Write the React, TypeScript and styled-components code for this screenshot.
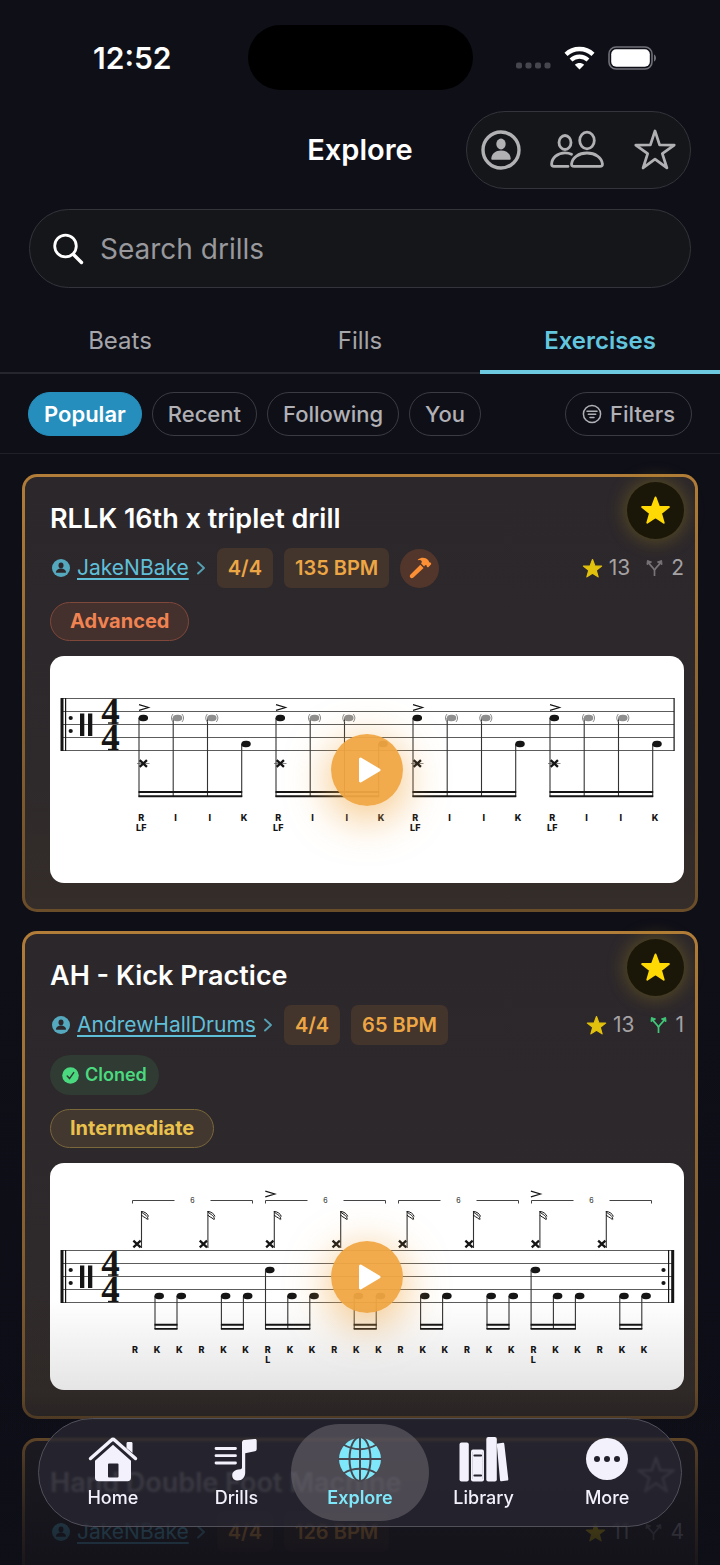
import React from 'react';
import styled, { createGlobalStyle, css } from 'styled-components';

const Global = createGlobalStyle`
  *, *::before, *::after { box-sizing: border-box; }
  body {
    margin: 0;
    background: #0f0f18;
    color: #fff;
    font-family: Inter, "Liberation Sans", sans-serif;
    -webkit-font-smoothing: antialiased;
  }
  button, input { font: inherit; color: inherit; }
  button { margin: 0; padding: 0; border: 0; background: none; cursor: pointer; }
  svg { display: block; }
`;

const Screen = styled.div`
  position: relative;
  display: flex;
  flex-direction: column;
  height: 100vh;
  overflow: hidden;
  background: linear-gradient(#0f0f18 0 60%, #0c0d16);
`;

/* ---------- status bar ---------- */

const StatusBar = styled.div`
  display: grid;
  grid-template-columns: 1fr 225px 1fr;
  align-items: center;
  flex: none;
  padding: 25px 0 21px;
`;

const Clock = styled.time`
  padding-left: 93px;
  font-size: 30px;
  line-height: 36px;
  font-weight: 600;
`;

const Island = styled.div`
  height: 65px;
  border-radius: 33px;
  background: #000;
`;

const StatusIcons = styled.div`
  display: flex;
  align-items: center;
  justify-content: flex-end;
  gap: 13px;
  padding-right: 63px;
`;

/* ---------- header ---------- */

const NavBar = styled.header`
  display: grid;
  grid-template-columns: 1fr auto 1fr;
  align-items: center;
  flex: none;
  padding: 0 29px;
`;

const Title = styled.h1`
  grid-column: 2;
  margin: 0;
  font-size: 29px;
  line-height: 38px;
  font-weight: 600;
`;

const glass = css`
  border: 1px solid #33343c;
  border-radius: 40px;
  background: #15161a;
`;

const Actions = styled.div`
  ${glass}
  display: flex;
  align-items: center;
  justify-self: end;
  gap: 29px;
  height: 78px;
  padding: 0 13px 0 14px;
  color: #b1b1b4;
`;

const SearchField = styled.label`
  ${glass}
  display: flex;
  align-items: center;
  flex: none;
  gap: 16px;
  height: 79px;
  margin: 20px 29px 0;
  padding: 0 22px;
`;

const SearchInput = styled.input`
  flex: 1;
  min-width: 0;
  padding: 0;
  border: 0;
  outline: 0;
  background: none;
  font-size: 28px;
  line-height: 36px;
  &::placeholder { color: #98989d; opacity: 1; }
`;

const Tabs = styled.div`
  display: grid;
  grid-template-columns: repeat(3, 1fr);
  flex: none;
  height: 86px;
  box-shadow: inset 0 -2px #26262e;
`;

const Tab = styled.button<{ $active?: boolean }>`
  padding-top: 24px;
  border-bottom: 4px solid ${p => (p.$active ? '#6cc9e0' : 'transparent')};
  color: ${p => (p.$active ? '#63c6df' : '#a5a5aa')};
  font-size: 24px;
  line-height: 30px;
  font-weight: ${p => (p.$active ? 600 : 400)};
`;

const FilterRow = styled.div`
  display: flex;
  align-items: center;
  flex: none;
  gap: 10px;
  padding: 18px 28px 17px;
  border-bottom: 1px solid #20202a;
`;

const Chip = styled.button<{ $active?: boolean; $end?: boolean }>`
  display: flex;
  align-items: center;
  gap: 8px;
  height: 44px;
  margin-left: ${p => (p.$end ? 'auto' : 0)};
  padding: 0 ${p => (p.$end ? 16 : 15)}px;
  border: 1px solid ${p => (p.$active ? '#268ebc' : '#3b3b43')};
  border-radius: 22px;
  background: ${p => (p.$active ? '#268ebc' : 'transparent')};
  color: ${p => (p.$active ? '#fff' : '#b0b0b5')};
  font-size: 22px;
  line-height: 26px;
  font-weight: ${p => (p.$active ? 600 : 500)};
`;

/* ---------- feed ---------- */

const Feed = styled.main`
  display: flex;
  flex-direction: column;
  flex: 1;
  min-height: 0;
  gap: 19px;
  padding: 20px 22px 0;
  overflow: hidden;
`;

const Card = styled.article`
  position: relative;
  display: flex;
  flex-direction: column;
  align-items: flex-start;
  flex: none;
  padding: 26px 11px 26px 25px;
  border: 3px solid transparent;
  border-radius: 15px;
  background:
    linear-gradient(#2c272b, #2e292b 70%, #342d29) padding-box,
    linear-gradient(#b17d38, #6a4d29) border-box;
`;

const CardTitle = styled.h2`
  margin: 0 0 13px;
  font-size: 27px;
  line-height: 32px;
  font-weight: 600;
`;

const Meta = styled.div`
  display: flex;
  align-items: center;
  width: 100%;
  gap: 11px;
`;

const Author = styled.a`
  display: flex;
  align-items: center;
  gap: 7px;
  padding-left: 2px;
  color: #5fbfd8;
  font-size: 21px;
  line-height: 26px;
  text-decoration: none;
  span {
    text-decoration: underline;
    text-decoration-thickness: 2px;
    text-underline-offset: 3px;
  }
`;

const Badge = styled.span`
  padding: 6px 11px;
  border-radius: 7px;
  background: #43342c;
  color: #eda644;
  font-size: 20px;
  line-height: 28px;
  font-weight: 600;
`;

const ToolBadge = styled.span`
  display: grid;
  place-items: center;
  width: 39px;
  height: 39px;
  border-radius: 50%;
  background: #52362b;
  color: #fd9034;
`;

const Stats = styled.div`
  display: flex;
  align-items: center;
  gap: 6px;
  margin-left: auto;
  color: #a5a2a4;
  font-size: 21px;
  line-height: 26px;
`;

const Fork = styled.span<{ $active?: boolean }>`
  margin: 0 2px 0 10px;
  color: ${p => (p.$active ? '#3fc878' : '#777376')};
`;

const Cloned = styled.span`
  display: flex;
  align-items: center;
  gap: 6px;
  height: 40px;
  margin-top: 10px;
  padding: 0 12px;
  border-radius: 20px;
  background: #2f3b33;
  color: #4bd97f;
  font-size: 18px;
  line-height: 24px;
  font-weight: 600;
`;

const levels = {
  Advanced: { ink: '#f08351', line: '#80483a', fill: '#44302d' },
  Intermediate: { ink: '#e9c14c', line: '#7a673a', fill: '#433830' },
};
type LevelName = keyof typeof levels;

const Level = styled.span<{ $level: LevelName }>`
  height: 39px;
  margin: 14px 0 15px;
  padding: 0 19px;
  border: 1px solid ${p => levels[p.$level].line};
  border-radius: 20px;
  background: ${p => levels[p.$level].fill};
  color: ${p => levels[p.$level].ink};
  font-size: 20px;
  line-height: 37px;
  font-weight: 700;
`;

const Favorite = styled.button<{ $on?: boolean }>`
  position: absolute;
  top: 5px;
  right: 11px;
  display: grid;
  place-items: center;
  width: 57px;
  height: 57px;
  border-radius: 50%;
  color: ${p => (p.$on ? '#ffd904' : '#c5c3ca')};
  ${p => p.$on && css`
    background: #1b1708;
    box-shadow: 0 0 18px 2px rgba(160, 135, 20, 0.4);
  `}
`;

const Sheet = styled.figure`
  position: relative;
  width: 100%;
  margin: 0;
  overflow: hidden;
  border-radius: 14px;
  background: #fff;
  svg { width: 100%; height: auto; }
`;

const PlayLayer = styled.div`
  position: absolute;
  inset: 0;
  display: grid;
  place-items: center;
`;

const Play = styled.button`
  display: grid;
  place-items: center;
  width: 72px;
  height: 72px;
  border-radius: 50%;
  background: rgba(240, 167, 66, 0.95);
  box-shadow: 0 10px 40px 4px rgba(240, 167, 66, 0.6);
  svg { width: 28px; }
`;

/* ---------- tab bar ---------- */

const Fade = styled.div`
  position: absolute;
  right: 0;
  bottom: 0;
  left: 0;
  height: 265px;
  background: linear-gradient(
    rgba(15, 15, 24, 0),
    rgba(15, 15, 24, 0.11) 34%,
    rgba(15, 15, 24, 0.3) 44%,
    rgba(15, 15, 24, 0.55) 54%,
    rgba(15, 15, 24, 0.72) 78%,
    rgba(15, 15, 24, 0.88)
  );
  pointer-events: none;
`;

const TabBar = styled.nav`
  position: absolute;
  right: 38px;
  bottom: 38px;
  left: 38px;
  display: grid;
  grid-template-columns: repeat(5, 1fr);
  height: 109px;
  padding: 5px 12px;
  border: 1px solid #51505b;
  border-radius: 55px;
  background: rgba(41, 40, 51, 0.72);
  backdrop-filter: blur(1px);
`;

const TabItem = styled.button<{ $active?: boolean }>`
  display: flex;
  flex-direction: column;
  align-items: center;
  gap: 4px;
  height: 97px;
  margin: 0 ${p => (p.$active ? '-7px' : '0')};
  padding-top: 12px;
  border-radius: 49px;
  background: ${p => (p.$active ? 'rgba(112, 106, 114, 0.55)' : 'none')};
  color: ${p => (p.$active ? '#7ee8fa' : '#f3f1fb')};
  font-size: 18px;
  line-height: 24px;
  font-weight: ${p => (p.$active ? 600 : 500)};
`;

/* ---------- icons ---------- */

const STAR = 'M12 1.8 L14.7 9 L22.4 9.3 L16.3 14.1 L18.4 21.5 L12 17.3 L5.6 21.5 L7.7 14.1 L1.6 9.3 L9.3 9 Z';
const STAR_LINE = 'M12 1.600 L14.500 9.200 L22.500 9.300 L16 14 L18.500 21.800 L12 17 L5.500 21.800 L8 14 L1.500 9.300 L9.500 9.200 Z';

const StarIcon = ({ size, outline }: { size: number; outline?: boolean }) => (
  <svg width={size} height={size} viewBox="0 0 24 24" fill={outline ? 'none' : 'currentColor'}
    stroke="currentColor" strokeWidth={outline ? 1.5 : 1.4} strokeLinejoin="round">
    <path d={outline ? STAR_LINE : STAR} />
  </svg>
);

const ProfileIcon = () => (
  <svg width="40" height="40" viewBox="0 0 40 40" fill="currentColor">
    <circle cx="20" cy="20" r="18" fill="none" stroke="currentColor" strokeWidth="3.4" />
    <ellipse cx="20" cy="14" rx="4.7" ry="5.4" />
    <path d="M10.3 28.5c.4-5 4.3-8 9.7-8s9.300 3 9.700 8c.1.8-.4 1.300-1.200 1.300h-17c-.8 0-1.300-.5-1.200-1.300z" />
  </svg>
);

const PeopleIcon = () => (
  <svg width="54" height="42" viewBox="0 0 54 42" fill="none" stroke="currentColor" strokeWidth="2.800" strokeLinecap="round" strokeLinejoin="round">
    <ellipse cx="15" cy="13.500" rx="6" ry="7" />
    <ellipse cx="37" cy="11.500" rx="7.300" ry="8.300" />
    <path d="M21.500 25.300c-1.900-1-4.200-1.500-6.500-1.500C7.600 23.800 1.800 29 1.600 35c0 1.700.8 2.400 2.400 2.400h14" />
    <path d="M24.200 37.400c-2 0-2.800-.9-2.600-2.700C22.400 28.500 28.600 24 37 24s14.600 4.500 15.400 10.700c.2 1.800-.6 2.700-2.600 2.700z" />
  </svg>
);

const SearchIcon = () => (
  <svg width="32" height="32" viewBox="0 0 32 32" fill="none" stroke="#fff" strokeWidth="2.800" strokeLinecap="round">
    <circle cx="13.500" cy="13" r="10.800" />
    <path d="M21.500 21.500L29.500 29.500" strokeWidth="3.400" />
  </svg>
);

const FilterIcon = () => (
  <svg width="20" height="20" viewBox="0 0 20 20" fill="none" stroke="currentColor" strokeWidth="1.500" strokeLinecap="round">
    <circle cx="10" cy="10" r="8.600" />
    <path d="M5 7.200h10M6.300 10.300h7.400M8 13.400h4" />
  </svg>
);

const UserIcon = () => (
  <svg width="18" height="18" viewBox="0 0 18 18">
    <circle cx="9" cy="9" r="9" fill="#55a9be" />
    <ellipse cx="9" cy="6.400" rx="2.500" ry="2.800" fill="#2c272b" />
    <path d="M3.900 13c.5-2.300 2.500-3.500 5.100-3.500s4.600 1.200 5.100 3.500c.1.500-.2.800-.7.800H4.600c-.5 0-.8-.3-.7-.8z" fill="#2c272b" />
  </svg>
);

const ChevronIcon = () => (
  <svg width="10" height="14" viewBox="0 0 10 14" fill="none" stroke="#55a0b3" strokeWidth="1.900" strokeLinecap="round" strokeLinejoin="round">
    <path d="M2 1.500L8 7L2 12.500" />
  </svg>
);

const HammerIcon = () => (
  <svg width="24" height="24" viewBox="0 0 24 24" fill="currentColor">
    <path d="M12.300 8.700l3.300 3.300-10.200 9.600c-1 .9-2.400.8-3.100 0s-.7-2.100.2-3z" />
    <path d="M10 3.600c3.100-2.500 7.300-2.500 10.100.4.900.9.600 1.700 1.300 2.300.5.500 1 .1 1.500.6.500.500.4 1 0 1.500l-2.300 2.500c-.5.500-1 .5-1.500 0-.6-.6-.1-1.200-.7-1.700-.5-.5-1-.2-1.600.3l-.7.900-3-3c1-1.200 1-2.200-.100-2.900-.8-.5-1.800-.5-2.800-.3-.5.100-.6-.3-.2-.6z" />
  </svg>
);

const ForkIcon = () => (
  <svg width="17" height="18" viewBox="0 0 17 18" fill="none" stroke="currentColor" strokeWidth="1.700" strokeLinejoin="round">
    <path d="M8.500 17v-5.500c0-2-5.200-5.500-5.700-8M8.500 11.500c0-2 5.200-5.500 5.700-8" />
    <path d="M1 5.600L1.400 1.500L5.600 3z M16 5.600L15.600 1.500L11.400 3z" fill="currentColor" strokeWidth="1" />
  </svg>
);

const CheckIcon = () => (
  <svg width="17" height="17" viewBox="0 0 17 17">
    <circle cx="8.500" cy="8.500" r="8.300" fill="#4bd97f" />
    <path d="M5.200 9l2.300 2.600 4.200-6" fill="none" stroke="#2f3b33" strokeWidth="1.500" strokeLinecap="round" strokeLinejoin="round" />
  </svg>
);

const SignalIcon = () => (
  <svg width="35" height="24" viewBox="0 0 35 24" fill="#46464f">
    {[0, 9.500, 19, 28.500].map(x => <rect key={x} x={x} y="16.500" width="6" height="6" rx="2" />)}
  </svg>
);

const WifiIcon = () => (
  <svg width="31" height="24" viewBox="0 0 31 24" fill="none" stroke="#fff">
    <path d="M2 8.300C9.500 1.200 21.500 1.200 29 8.300" strokeWidth="4.400" />
    <path d="M7 14c4.900-4.400 12.100-4.400 17 0" strokeWidth="4.200" />
    <path d="M15.500 23.500L10.800 18.800c2.700-2.300 6.700-2.300 9.400 0z" fill="#fff" stroke="none" />
  </svg>
);

const BatteryIcon = () => (
  <svg width="49" height="24" viewBox="0 0 49 24">
    <rect x="1" y="1" width="43" height="22" rx="7" fill="none" stroke="#71717a" strokeWidth="1.600" />
    <rect x="3.200" y="3.200" width="38.600" height="17.600" rx="5" fill="#fff" />
    <path d="M46 8.500c2.700 1.200 2.700 5.800 0 7z" fill="#71717a" />
  </svg>
);

const HomeIcon = () => (
  <svg width="50" height="46" viewBox="0 0 50 46" fill="currentColor">
    <path d="M2.500 22.500L23.200 4.200c1.100-1 2.500-1 3.600 0L47.500 22.500" fill="none" stroke="currentColor" strokeWidth="3.400" strokeLinecap="round" strokeLinejoin="round" />
    <path d="M38.500 12V7.500c0-1 .5-1.500 1.500-1.500h3c1 0 1.500.5 1.500 1.500V17z" />
    <path fillRule="evenodd" d="M25 8.800L43 24.800V41.500c0 2.500-1.200 3.700-3.700 3.700H10.700c-2.500 0-3.700-1.200-3.700-3.700V24.800z M20 28.500V40.500a1 1 0 0 0 1 1h8.500a1 1 0 0 0 1-1V28.500a1 1 0 0 0-1-1H21a1 1 0 0 0-1 1z" />
  </svg>
);

const DrillsIcon = () => (
  <svg width="46" height="46" viewBox="0 0 46 46" fill="currentColor">
    <path d="M3 12.500H22.500M3 19.700H22.500M3 27H22.500" stroke="currentColor" strokeWidth="2.800" strokeLinecap="round" />
    <path d="M29 6.600c0-1.500.7-2.400 2-2.700L41.500 3c1.500-.3 2.200.3 2.200 1.700v8.200c0 1.300-.6 2-1.800 2.300l-9.700 2v19.300c0 4.700-3 8-7.300 8-3.500 0-5.700-2.100-5.700-5.100 0-3.300 2.400-5.200 6-5.800l2.300-.4c1-.2 1.500-.9 1.500-2z" />
  </svg>
);

const GlobeIcon = () => (
  <svg width="46" height="46" viewBox="0 0 46 46">
    <circle cx="23" cy="23" r="21" fill="currentColor" />
    <g fill="none" stroke="#48464f" strokeWidth="2">
      <path d="M23 1v44M1 23h44" />
      <ellipse cx="23" cy="23" rx="10.500" ry="22" />
      <path d="M6.500 8.500c9 6.200 24 6.200 33 0M6.500 37.500c9-6.200 24-6.200 33 0" />
    </g>
  </svg>
);

const LibraryIcon = () => (
  <svg width="50" height="46" viewBox="0 0 50 46" fill="currentColor">
    <rect x="0.500" y="6.500" width="9.300" height="39" rx="2" />
    <rect x="12" y="13.500" width="13" height="32" rx="2" />
    <path d="M15.500 19.500h6.500M15.500 39.500h6.500" stroke="#26252f" strokeWidth="2.200" strokeLinecap="round" />
    <path d="M13.500 16v27M23.700 16v27" stroke="#c9c7d2" strokeWidth="0.700" />
    <rect x="27.300" y="1" width="10.500" height="44.500" rx="2" />
    <path d="M37.800 8.500c0-.7.400-1 1-1.100l5-.6c.9-.1 1.400.3 1.500 1.200l4 35c.1 1-.3 1.500-1.200 1.600l-5.600.6c-.9.100-1.400-.3-1.500-1.200z" />
  </svg>
);

const MoreIcon = () => (
  <svg width="46" height="46" viewBox="0 0 46 46">
    <circle cx="23" cy="23" r="21" fill="currentColor" />
    {[13, 23, 33].map(x => <circle key={x} cx={x} cy="23" r="3" fill="#22212b" />)}
  </svg>
);

/* ---------- notation ---------- */

const INK = '#151515';

const Lyric = ({ x, y, children }: { x: number; y: number; children: string }) => (
  <text x={x} y={y} textAnchor="middle" fontFamily="Inter, sans-serif" fontWeight="800" fontSize="9" fill={INK}>{children}</text>
);

const Head = ({ x, y, ghost }: { x: number; y: number; ghost?: boolean }) => (
  <g>
    <ellipse cx={x} cy={y} rx="4.800" ry="3.300" fill={ghost ? '#8f8f8f' : INK} transform={`rotate(-4 ${x} ${y})`} />
    {ghost && (
      <path d={`M${x - 4.500} ${y - 4}q-3.200 4 0 8M${x + 4.500} ${y - 4}q3.200 4 0 8`} fill="none" stroke="#8f8f8f" strokeWidth="1" />
    )}
  </g>
);

const Cross = ({ x, y }: { x: number; y: number }) => (
  <path d={`M${x - 2.800} ${y - 2.600}L${x + 2.800} ${y + 2.600}M${x - 2.800} ${y + 2.600}L${x + 2.800} ${y - 2.600}`} stroke={INK} strokeWidth="2.300" strokeLinecap="square" />
);

const Accent = ({ x, y }: { x: number; y: number }) => (
  <path d={`M${x} ${y - 2.800}L${x + 9.500} ${y}L${x} ${y + 2.800}`} fill="none" stroke={INK} strokeWidth="1.200" />
);

const Beam = ({ x1, x2, y }: { x1: number; x2: number; y: number }) => (
  <path d={`M${x1 - 0.500} ${y}H${x2 + 0.500}M${x1 - 0.500} ${y + 4.200}H${x2 + 0.500}`} stroke={INK} strokeWidth="1.900" />
);

const Staff = ({ top, repeatEnd }: { top: number; repeatEnd?: boolean }) => (
  <g fill={INK}>
    {[0, 1, 2, 3, 4].map(i => (
      <path key={i} d={`M11 ${top + i * 13}H624`} stroke="#5c5c5c" strokeWidth="1" />
    ))}
    <rect x="10.500" y={top - 0.500} width="3" height="53" />
    <rect x="15" y={top - 0.500} width="1.200" height="53" />
    <circle cx="20.700" cy={top + 19.500} r="2.100" />
    <circle cx="20.700" cy={top + 32.500} r="2.100" />
    <rect x="30" y={top + 15} width="4.300" height="22.500" />
    <rect x="38" y={top + 15} width="4.300" height="22.500" />
    {[25, 51.500].map(dy => (
      <g key={dy}>
        <text x="60.500" y={top + dy} textAnchor="middle" fontFamily="Liberation Serif, serif" fontWeight="700" fontSize="37">4</text>
        <rect x="58" y={top + dy - 1.200} width="10.500" height="1.400" />
      </g>
    ))}
    {repeatEnd ? (
      <>
        <circle cx="613.500" cy={top + 19.500} r="2.100" />
        <circle cx="613.500" cy={top + 32.500} r="2.100" />
        <rect x="618" y={top - 0.500} width="1.200" height="53" />
        <rect x="621.200" y={top - 0.500} width="3" height="53" />
      </>
    ) : (
      <rect x="623.500" y={top - 0.500} width="1.200" height="53" />
    )}
  </g>
);

const TripletScore = () => (
  <svg viewBox="0 0 634 227" role="img" aria-label="RLLK notation">
    <Staff top={42.500} />
    {[0, 1, 2, 3].map(g => {
      const x = 89 + g * 137;
      const stems = [0, 34.200, 68.500, 102.700];
      return (
        <g key={g}>
          <Accent x={x} y={51.500} />
          {stems.map((s, i) => (
            <path key={s} d={`M${x + s} ${i === 3 ? 88 : 62}V141`} stroke="#333" strokeWidth="1.100" />
          ))}
          <Head x={x + 4.300} y={62} />
          <Head x={x + 38.500} y={62} ghost />
          <Head x={x + 72.800} y={62} ghost />
          <Head x={x + 107} y={88} />
          <path d={`M${x - 2} 107.500h12.500`} stroke="#555" strokeWidth="0.700" />
          <Cross x={x + 4.300} y={107.500} />
          <Beam x1={x} x2={x + 102.700} y={136} />
          {['R', 'I', 'I', 'K'].map((t, i) => (
            <Lyric key={i} x={x + 2.300 + i * 34.250} y={164.500}>{t}</Lyric>
          ))}
          <Lyric x={x + 2.300} y={174.800}>LF</Lyric>
        </g>
      );
    })}
  </svg>
);

const KickScore = () => (
  <svg viewBox="0 0 634 227" role="img" aria-label="Kick practice notation">
    <Staff top={87.500} repeatEnd />
    {[0, 1, 2, 3].map(g => {
      const x = 82.500 + g * 133;
      return (
        <g key={g}>
          <path d={`M${x} 40.500V37.500H${x + 42}M${x + 78} 37.500H${x + 120}V40.500`} fill="none" stroke="#444" strokeWidth="1" />
          <text x={x + 60} y="40" textAnchor="middle" fontFamily="Inter, sans-serif" fontSize="7" fill={INK}>6</text>
        </g>
      );
    })}
    {[0, 1, 2, 3, 4, 5, 6, 7].map(n => {
      const x = 87 + n * 66.400;
      const low = n === 2 || n === 6;
      return (
        <g key={n}>
          <Cross x={x} y={81} />
          <path d={`M${x + 4.500} 85V48`} stroke="#333" strokeWidth="1.100" />
          <path d={`M${x + 4.500} 48.500c.5 2.500 6.500 3 6.500 8M${x + 4.500} 52c.5 1.500 3.500 2 6 4.500M${x + 4.500} 48.500c3 0 6.500 2.500 7 5`} fill="none" stroke={INK} strokeWidth="1" />
          {low && (
            <>
              <Accent x={x - 4.500} y={31} />
              <Head x={x} y={107} />
              <path d={`M${x - 4.300} 107V166`} stroke="#333" strokeWidth="1.100" />
            </>
          )}
          <path d={`M${x + 18} 133V166M${x + 40} 133V166`} stroke="#333" strokeWidth="1.100" />
          <Head x={x + 22.200} y={133} />
          <Head x={x + 44.300} y={133} />
          <Beam x1={low ? x - 4.300 : x + 18} x2={x + 40} y={161.700} />
          <Lyric x={x - 2} y={190}>R</Lyric>
          <Lyric x={x + 20.200} y={190}>K</Lyric>
          <Lyric x={x + 42.300} y={190}>K</Lyric>
          {low && <Lyric x={x - 2} y={200.300}>L</Lyric>}
        </g>
      );
    })}
  </svg>
);

/* ---------- page ---------- */

type Drill = {
  title: string;
  author: string;
  bpm: number;
  stars: number;
  forks: number;
  favorite?: boolean;
  cloned?: boolean;
  tool?: boolean;
  level: LevelName;
  score: React.ReactNode;
};

const drills: Drill[] = [
  { title: 'RLLK 16th x triplet drill', author: 'JakeNBake', bpm: 135, stars: 13, forks: 2, favorite: true, tool: true, level: 'Advanced', score: <TripletScore /> },
  { title: 'AH - Kick Practice', author: 'AndrewHallDrums', bpm: 65, stars: 13, forks: 1, favorite: true, cloned: true, level: 'Intermediate', score: <KickScore /> },
];

const StatStar = styled.span`
  color: #e2c20d;
`;

const DrillHeader = ({ drill }: { drill: Omit<Drill, 'level' | 'score'> }) => (
  <>
    <CardTitle>{drill.title}</CardTitle>
    <Favorite type="button" $on={drill.favorite} aria-label={`Favorite ${drill.title}`}>
      <StarIcon size={drill.favorite ? 31 : 40} outline={!drill.favorite} />
    </Favorite>
    <Meta>
      <Author href="#author">
        <UserIcon />
        <span>{drill.author}</span>
        <ChevronIcon />
      </Author>
      <Badge>4/4</Badge>
      <Badge>{drill.bpm} BPM</Badge>
      {drill.tool && <ToolBadge><HammerIcon /></ToolBadge>}
      <Stats>
        <StatStar><StarIcon size={21} /></StatStar>
        {drill.stars}
        <Fork $active={drill.cloned}><ForkIcon /></Fork>
        {drill.forks}
      </Stats>
    </Meta>
    {drill.cloned && <Cloned><CheckIcon />Cloned</Cloned>}
  </>
);

const DrillCard = ({ drill }: { drill: Drill }) => (
  <Card>
    <DrillHeader drill={drill} />
    <Level $level={drill.level}>{drill.level}</Level>
    <Sheet>
      {drill.score}
      <PlayLayer>
        <Play type="button" aria-label={`Play ${drill.title}`}>
          <svg viewBox="0 0 28 28" fill="#fff" stroke="#fff" strokeWidth="3" strokeLinejoin="round">
            <path d="M7.500 3L26 14L7.500 25z" />
          </svg>
        </Play>
      </PlayLayer>
    </Sheet>
  </Card>
);

const PeekCard = styled(Card)`
  flex: 1 0 auto;
  padding-bottom: 0;
  border-bottom: 0;
  border-radius: 15px 15px 0 0;
`;

const tabItems = [
  { label: 'Home', icon: <HomeIcon /> },
  { label: 'Drills', icon: <DrillsIcon /> },
  { label: 'Explore', icon: <GlobeIcon />, active: true },
  { label: 'Library', icon: <LibraryIcon /> },
  { label: 'More', icon: <MoreIcon /> },
];

export default function App() {
  return (
    <Screen>
      <Global />
      <StatusBar>
        <Clock>12:52</Clock>
        <Island />
        <StatusIcons>
          <SignalIcon />
          <WifiIcon />
          <BatteryIcon />
        </StatusIcons>
      </StatusBar>

      <NavBar>
        <Title>Explore</Title>
        <Actions>
          <button type="button" aria-label="Profile"><ProfileIcon /></button>
          <button type="button" aria-label="People"><PeopleIcon /></button>
          <button type="button" aria-label="Favorites"><StarIcon size={44} outline /></button>
        </Actions>
      </NavBar>

      <SearchField>
        <SearchIcon />
        <SearchInput type="search" placeholder="Search drills" aria-label="Search drills" />
      </SearchField>

      <Tabs role="tablist">
        <Tab type="button" role="tab">Beats</Tab>
        <Tab type="button" role="tab">Fills</Tab>
        <Tab type="button" role="tab" aria-selected $active>Exercises</Tab>
      </Tabs>

      <FilterRow>
        <Chip type="button" $active>Popular</Chip>
        <Chip type="button">Recent</Chip>
        <Chip type="button">Following</Chip>
        <Chip type="button">You</Chip>
        <Chip type="button" $end><FilterIcon />Filters</Chip>
      </FilterRow>

      <Feed>
        {drills.map(d => <DrillCard key={d.title} drill={d} />)}
        <PeekCard>
          <DrillHeader drill={{ title: 'Hand Double Foot Machine', author: 'JakeNBake', bpm: 126, stars: 11, forks: 4 }} />
        </PeekCard>
      </Feed>

      <Fade />
      <TabBar aria-label="Main">
        {tabItems.map(t => (
          <TabItem key={t.label} type="button" $active={t.active}>
            {t.icon}
            {t.label}
          </TabItem>
        ))}
      </TabBar>
    </Screen>
  );
}
